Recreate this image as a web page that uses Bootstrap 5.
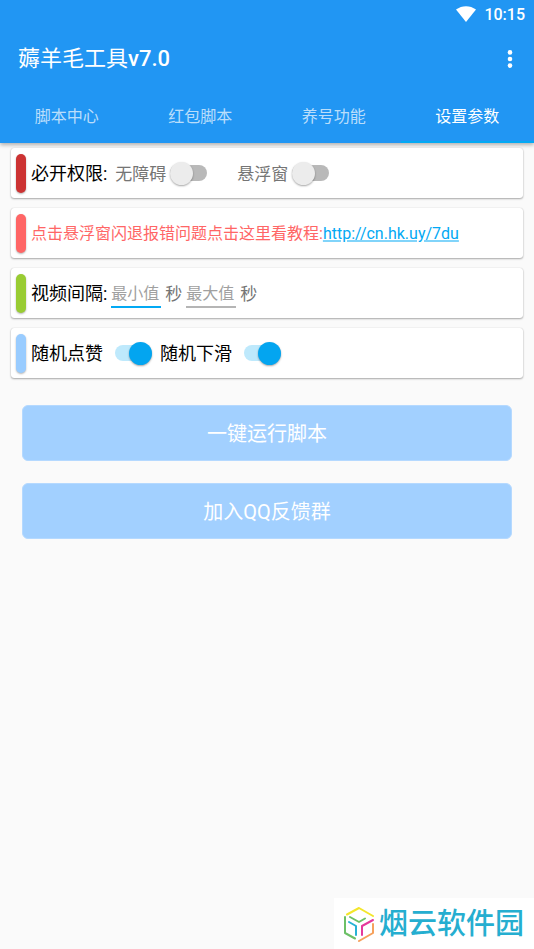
<!DOCTYPE html>
<html lang="zh-CN">
<head>
<meta charset="utf-8">
<meta name="viewport" content="width=device-width, initial-scale=1">
<title>薅羊毛工具v7.0</title>
<link href="https://cdn.jsdelivr.net/npm/bootstrap@5.3.0/dist/css/bootstrap.min.css" rel="stylesheet">
<style>
  body { font-family: Roboto, "Noto Sans CJK SC", sans-serif; background: #fafafa; color: #000; font-size: 16px; line-height: 24px; }
  .app-header { background: #2196f3; color: #fff; box-shadow: 0 2px 4px rgba(0,0,0,.3); }
  .status-bar { height: 28px; padding-right: 9px; gap: 8px; font-weight: 500; }
  .clock { padding-top: 2px; }
  .title-bar { height: 62px; padding-left: 18px; padding-right: 12px; }
  .app-title { font-size: 22px; line-height: 32px; font-weight: 500; }
  .app-title .cjk { font-weight: 400; }
  .menu-btn { width: 24px; height: 32px; }
  .tab-strip .nav-link { height: 53px; padding: 3px 0 0; border-radius: 0; border-bottom: 2px solid transparent; color: rgba(255,255,255,.7); line-height: 48px; }
  .tab-strip .nav-link.active { color: #fff; border-bottom-color: #03a9f4; }
  .panels { padding: 5px 11px 0; gap: 10px; }
  .panel { height: 50px; padding-left: 5px; background: #fff; border-radius: 3px; box-shadow: 0 1px 2px rgba(0,0,0,.32), 0 0 1px rgba(0,0,0,.2); white-space: nowrap; }
  .stripe { width: 10px; height: 39px; margin-right: 5px; border-radius: 5px; box-shadow: 0 1px 2px rgba(0,0,0,.3); }
  .stripe-red { background: #cc3333; }
  .stripe-coral { background: #ff6666; }
  .stripe-green { background: #99cc33; }
  .stripe-sky { background: #99ccff; }
  .heading-text { font-size: 18px; }
  .heading-text, .grey-text, .coral-text, .guide-link { padding-top: 2px; }
  .grey-text { color: #757575; font-size: 17px; }
  .coral-text { color: #ff6666; }
  .guide-link { color: #03a9f4; text-decoration-color: #81d4fa; text-decoration-thickness: 2px; text-underline-offset: 1px; }
  .toggle { appearance: none; display: flex; align-items: center; width: 37px; height: 16px; margin: 0; border-radius: 8px; background: #b9b9b9; flex: none; }
  .toggle::before { content: ""; flex: none; width: 23px; height: 23px; border-radius: 50%; background: #ececec; box-shadow: 0 1px 2px rgba(0,0,0,.35); }
  .toggle:checked { background: #bee9fc; }
  .toggle:checked::before { margin-left: auto; background: #03a5f0; }
  .next-option { margin-left: 30px; }
  .range-input { width: 50px; height: 30px; padding: 2px 0 0; border: 0; border-bottom: 2px solid #b5b5b5; background: transparent; outline: 0; color: #000; }
  .range-input::placeholder { color: #a0a0a0; opacity: 1; }
  .range-input.current { border-bottom-color: #03a9f4; }
  .actions { padding: 27px 22px 0; gap: 22px; }
  .btn-action { height: 56px; padding: 8px 12px 6px; border: 1px solid #b5d9ff; border-radius: 6px; background: #a2d0ff; color: #fff; font-size: 20px; }
  .brand { height: 51px; width: 200px; padding-left: 9px; gap: 4px; background: #fff; color: #25aed0; font-size: 29px; font-weight: 500; line-height: 48px; white-space: nowrap; }
</style>
</head>
<body>
<div class="d-flex flex-column min-vh-100">
  <header class="app-header">
    <div class="status-bar d-flex align-items-center justify-content-end">
      <svg width="20" height="16" viewBox="0 0 20 16" fill="#fff" aria-hidden="true"><path d="M0 3.5C6-1 14-1 20 3.5L10 16Z"/></svg>
      <span class="clock">10:15</span>
    </div>
    <div class="title-bar d-flex align-items-center justify-content-between">
      <h1 class="app-title m-0"><span class="cjk">薅羊毛工具</span>v7.0</h1>
      <button type="button" class="menu-btn btn p-0 border-0 d-flex align-items-center justify-content-center" aria-label="更多">
        <svg width="6" height="20" viewBox="0 0 6 20" fill="#fff"><circle cx="3" cy="3.4" r="2.3"/><circle cx="3" cy="10" r="2.3"/><circle cx="3" cy="16.6" r="2.3"/></svg>
      </button>
    </div>
    <nav class="tab-strip nav nav-justified flex-nowrap">
      <a class="nav-link" href="#scripts">脚本中心</a>
      <a class="nav-link" href="#packets">红包脚本</a>
      <a class="nav-link" href="#accounts">养号功能</a>
      <a class="nav-link active" href="#settings" aria-current="page">设置参数</a>
    </nav>
  </header>

  <main>
    <div class="panels d-flex flex-column">
      <section class="panel d-flex align-items-center">
        <span class="stripe stripe-red"></span>
        <span class="heading-text">必开权限:</span>
        <label class="grey-text ms-2 me-1" for="access">无障碍</label>
        <input class="toggle" type="checkbox" role="switch" id="access">
        <label class="grey-text next-option me-1" for="overlay">悬浮窗</label>
        <input class="toggle" type="checkbox" role="switch" id="overlay">
      </section>
      <section class="panel d-flex align-items-center">
        <span class="stripe stripe-coral"></span>
        <span class="coral-text">点击悬浮窗闪退报错问题点击这里看教程:</span><a class="guide-link" href="http://cn.hk.uy/7du">http://cn.hk.uy/7du</a>
      </section>
      <section class="panel d-flex align-items-center">
        <span class="stripe stripe-green"></span>
        <span class="heading-text me-1">视频间隔:</span>
        <input class="range-input current" type="text" placeholder="最小值" aria-label="最小值">
        <span class="grey-text mx-1">秒</span>
        <input class="range-input" type="text" placeholder="最大值" aria-label="最大值">
        <span class="grey-text mx-1">秒</span>
      </section>
      <section class="panel d-flex align-items-center">
        <span class="stripe stripe-sky"></span>
        <label class="heading-text me-2" for="like">随机点赞</label>
        <input class="toggle ms-1" type="checkbox" role="switch" id="like" checked>
        <label class="heading-text mx-2" for="scroll">随机下滑</label>
        <input class="toggle ms-1" type="checkbox" role="switch" id="scroll" checked>
      </section>
    </div>
    <div class="actions d-grid">
      <button type="button" class="btn btn-action">一键运行脚本</button>
      <button type="button" class="btn btn-action">加入QQ反馈群</button>
    </div>
  </main>

  <footer class="brand d-flex align-items-center mt-auto align-self-end">
    <svg width="32" height="36" viewBox="0 0 32 36" fill="none" stroke-width="2" stroke-linejoin="round" stroke-linecap="round" aria-hidden="true">
      <path stroke="#f3e62b" d="M4 8.500 16 2 30 10"/>
      <path stroke="#6cc067" d="M7 11 16 16 22 12.500M2 11V27L12 32.500"/>
      <path stroke="#27b2d4" d="M6 16 13 20V29"/>
      <path stroke="#e5399b" d="M19 29V20L30 14"/>
      <path stroke="#f6a15c" d="M30 18V27L16 35"/>
    </svg>
    <span>烟云软件园</span>
  </footer>
</div>
<script src="https://cdn.jsdelivr.net/npm/bootstrap@5.3.0/dist/js/bootstrap.bundle.min.js"></script>
</body>
</html>
